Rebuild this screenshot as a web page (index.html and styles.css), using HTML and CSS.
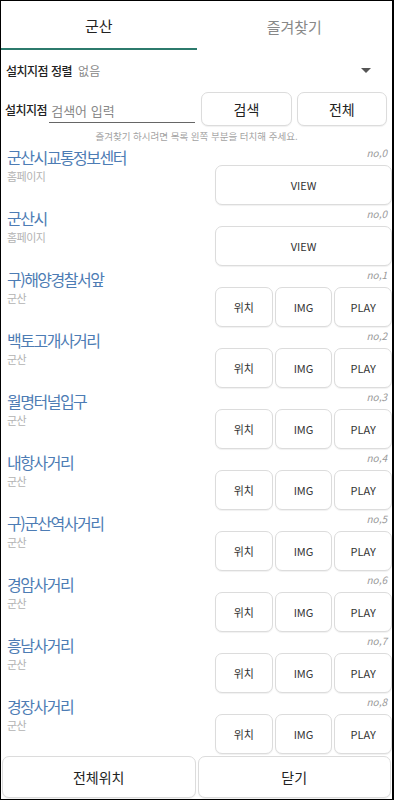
FILE: index.html
```html
<!DOCTYPE html>
<html lang="ko">
<head>
  <meta charset="UTF-8" />
  <meta name="viewport" content="width=device-width, initial-scale=1" />
  <title>군산 설치지점</title>
  <link rel="stylesheet" href="styles.css">
</head>
<body>
  <div class="screen">

    <!-- 탭 -->
    <div class="tabs">
      <div class="tab active">군산</div>
      <div class="tab">즐겨찾기</div>
    </div>

    <div class="sort-row">
      <span class="sort-label">설치지점 정렬</span>
      <span class="sort-value">없음</span>
      <span class="arrow"></span>
    </div>

    <div class="search-row">
      <span class="search-label">설치지점</span>
      <input class="search-input" type="text" placeholder="검색어 입력" />
      <button class="btn search-btn">검색</button>
      <button class="btn search-btn">전체</button>
    </div>

    <p class="hint">즐겨찾기 하시려면 목록 왼쪽 부분을 터치해 주세요.</p>

    <div class="list">
      <div class="item">
        <div class="info">
          <div class="title">군산시교통정보센터</div>
          <div class="sub">홈페이지</div>
        </div>
        <div class="side">
          <div class="no">no,0</div>
          <div class="actions"><button class="btn act">VIEW</button></div>
        </div>
      </div>

      <div class="item">
        <div class="info">
          <div class="title">군산시</div>
          <div class="sub">홈페이지</div>
        </div>
        <div class="side">
          <div class="no">no,0</div>
          <div class="actions"><button class="btn act">VIEW</button></div>
        </div>
      </div>

      <div class="item">
        <div class="info">
          <div class="title">구)해양경찰서앞</div>
          <div class="sub">군산</div>
        </div>
        <div class="side">
          <div class="no">no,1</div>
          <div class="actions">
            <button class="btn act">위치</button>
            <button class="btn act">IMG</button>
            <button class="btn act">PLAY</button>
          </div>
        </div>
      </div>

      <div class="item">
        <div class="info">
          <div class="title">백토고개사거리</div>
          <div class="sub">군산</div>
        </div>
        <div class="side">
          <div class="no">no,2</div>
          <div class="actions">
            <button class="btn act">위치</button>
            <button class="btn act">IMG</button>
            <button class="btn act">PLAY</button>
          </div>
        </div>
      </div>

      <div class="item">
        <div class="info">
          <div class="title">월명터널입구</div>
          <div class="sub">군산</div>
        </div>
        <div class="side">
          <div class="no">no,3</div>
          <div class="actions">
            <button class="btn act">위치</button>
            <button class="btn act">IMG</button>
            <button class="btn act">PLAY</button>
          </div>
        </div>
      </div>

      <div class="item">
        <div class="info">
          <div class="title">내항사거리</div>
          <div class="sub">군산</div>
        </div>
        <div class="side">
          <div class="no">no,4</div>
          <div class="actions">
            <button class="btn act">위치</button>
            <button class="btn act">IMG</button>
            <button class="btn act">PLAY</button>
          </div>
        </div>
      </div>

      <div class="item">
        <div class="info">
          <div class="title">구)군산역사거리</div>
          <div class="sub">군산</div>
        </div>
        <div class="side">
          <div class="no">no,5</div>
          <div class="actions">
            <button class="btn act">위치</button>
            <button class="btn act">IMG</button>
            <button class="btn act">PLAY</button>
          </div>
        </div>
      </div>

      <div class="item">
        <div class="info">
          <div class="title">경암사거리</div>
          <div class="sub">군산</div>
        </div>
        <div class="side">
          <div class="no">no,6</div>
          <div class="actions">
            <button class="btn act">위치</button>
            <button class="btn act">IMG</button>
            <button class="btn act">PLAY</button>
          </div>
        </div>
      </div>

      <div class="item">
        <div class="info">
          <div class="title">흥남사거리</div>
          <div class="sub">군산</div>
        </div>
        <div class="side">
          <div class="no">no,7</div>
          <div class="actions">
            <button class="btn act">위치</button>
            <button class="btn act">IMG</button>
            <button class="btn act">PLAY</button>
          </div>
        </div>
      </div>

      <div class="item">
        <div class="info">
          <div class="title">경장사거리</div>
          <div class="sub">군산</div>
        </div>
        <div class="side">
          <div class="no">no,8</div>
          <div class="actions">
            <button class="btn act">위치</button>
            <button class="btn act">IMG</button>
            <button class="btn act">PLAY</button>
          </div>
        </div>
      </div>
    </div>

    <div class="footer">
      <button class="btn foot-btn">전체위치</button>
      <button class="btn foot-btn">닫기</button>
    </div>
  </div>
</body>
</html>
```

FILE: styles.css
```css
body {
  margin: 0;
  font-family: 'Noto Sans CJK KR', 'Noto Sans', sans-serif;
  background: #fff;
  color: #222;
}

.screen {
  width: 394px;
  height: 800px;
  box-sizing: border-box;
  border: 1px solid #000;
  border-right-width: 2px;
  display: flex;
  flex-direction: column;
  overflow: hidden;
}

/* 탭 */
.tabs {
  display: flex;
  height: 49px;
  flex-shrink: 0;
}

.tab {
  flex: 1;
  display: flex;
  align-items: center;
  justify-content: center;
  font-size: 15px;
  color: #888;
  box-sizing: border-box;
  padding-top: 2px;
}

.tab.active {
  color: #222;
  border-bottom: 2px solid #2c7a6c;
}

.sort-row {
  display: flex;
  align-items: center;
  height: 40px;
  padding: 0 5px;
  flex-shrink: 0;
}

.sort-label {
  font-size: 12px;
  font-weight: 500;
  color: #222;
  letter-spacing: -0.5px;
}

.sort-value {
  font-size: 12px;
  color: #888;
  margin-left: 6px;
  flex: 1;
}

.arrow {
  width: 0;
  height: 0;
  border-left: 5px solid transparent;
  border-right: 5px solid transparent;
  border-top: 5px solid #555;
  margin-right: 16px;
}

.search-row {
  display: flex;
  align-items: center;
  height: 34px;
  padding: 2px 5px 2px 4px;
  flex-shrink: 0;
}

.search-label {
  font-size: 12px;
  font-weight: 500;
  letter-spacing: -0.5px;
}

.search-input {
  width: 144px;
  margin-left: 2px;
  margin-right: 6px;
  border: none;
  border-bottom: 1px solid #666;
  padding: 6px 0 2px 2px;
  font-family: inherit;
  font-size: 13px;
  outline: none;
  color: #222;
  background: transparent;
}

.search-input::placeholder {
  color: #888;
}

.btn {
  font-family: inherit;
  background: #fff;
  border: 1px solid #dcdcdc;
  border-radius: 7px;
  box-shadow: 0 1px 1px rgba(0, 0, 0, 0.06);
  color: #333;
  padding: 0;
  cursor: pointer;
}

.search-btn {
  flex: 1;
  height: 34px;
  font-size: 14px;
  color: #222;
}

.search-btn + .search-btn {
  margin-left: 5px;
}

.hint {
  margin: 0;
  height: 16px;
  line-height: 16px;
  font-size: 9.5px;
  color: #a3a3a3;
  text-align: center;
  flex-shrink: 0;
}

.list {
  flex: 1;
  overflow: hidden;
  padding-top: 2px;
}

.item {
  display: grid;
  grid-template-columns: 1fr 177px;
  height: 61px;
}

.info {
  padding-left: 6px;
}

.title {
  font-size: 16px;
  line-height: 22px;
  color: #4d7cb4;
  letter-spacing: -1.5px;
}

.sub {
  font-size: 11px;
  line-height: 16px;
  color: #b3b3b3;
  letter-spacing: -0.5px;
}

.no {
  font-size: 10px;
  line-height: 14px;
  font-style: italic;
  color: #999;
  text-align: right;
  padding-right: 5px;
  margin-bottom: 5px;
}

.actions {
  display: flex;
  gap: 2px;
}

.act {
  flex: 1;
  height: 40px;
  font-size: 11px;
}

.footer {
  display: flex;
  gap: 2px;
  height: 44px;
  padding: 1px;
  box-sizing: border-box;
  flex-shrink: 0;
}

.foot-btn {
  flex: 1;
  font-size: 14px;
  color: #222;
}
```
